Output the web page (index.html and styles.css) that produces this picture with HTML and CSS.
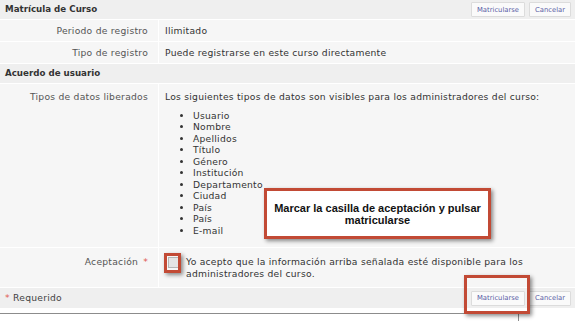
FILE: index.html
```html
<!DOCTYPE html>
<html lang="es">
<head>
    <meta charset="UTF-8">
    <meta name="viewport" content="width=device-width, initial-scale=1.0">
    <title>Matrícula de Curso</title>
    <link rel="stylesheet" href="styles.css">
</head>
<body>

    <div class="page">
        <div class="panel">
            <div class="bar">
                <h1>Matrícula de Curso</h1>
                <div class="actions">
                    <button>Matricularse</button>
                    <button>Cancelar</button>
                </div>
            </div>

            <div class="row">
                <div class="label">Periodo de registro</div>
                <div class="value">Ilimitado</div>
            </div>
            <div class="row">
                <div class="label">Tipo de registro</div>
                <div class="value">Puede registrarse en este curso directamente</div>
            </div>

            <div class="bar">
                <h2>Acuerdo de usuario</h2>
            </div>

            <div class="row data-row">
                <div class="label">Tipos de datos liberados</div>
                <div class="value">
                    <p>Los siguientes tipos de datos son visibles para los administradores del curso:</p>
                    <ul>
                        <li>Usuario</li>
                        <li>Nombre</li>
                        <li>Apellidos</li>
                        <li>Título</li>
                        <li>Género</li>
                        <li>Institución</li>
                        <li>Departamento</li>
                        <li>Ciudad</li>
                        <li>País</li>
                        <li>País</li>
                        <li>E-mail</li>
                    </ul>
                </div>
            </div>

            <div class="row accept-row">
                <div class="label"><span>Aceptación</span><span class="req">*</span></div>
                <div class="value accept">
                    <span class="check"></span>
                    <span>Yo acepto que la información arriba señalada esté disponible para los administradores del curso.</span>
                </div>
            </div>

            <div class="bar foot">
                <span><span class="req">*</span> Requerido</span>
                <div class="actions">
                    <button>Matricularse</button>
                    <button>Cancelar</button>
                </div>
            </div>
        </div>

        <div class="next-box"></div>

        <!-- marcas del tutorial -->
        <div class="callout">Marcar la casilla de aceptación y pulsar matricularse</div>
        <div class="mark mark-check"></div>
        <div class="mark mark-button"></div>
    </div>

</body>
</html>
```

FILE: styles.css
```css
html {
    overflow: hidden;
}

body {
    margin: 0;
    padding: 0;
    background-color: #ffffff;
    font-family: 'DejaVu Sans', Verdana, sans-serif;
    font-size: 9.2px;
    letter-spacing: 0.25px;
    line-height: 11.5px;
    color: #3a3a3a;
}

.page {
    position: relative;
    width: 580px;
    height: 321px;
}

.panel {
    width: 575px;
    display: flex;
    flex-direction: column;
    gap: 1px;
    background-color: #ffffff;
}

.bar {
    height: 19px;
    display: flex;
    align-items: center;
    justify-content: space-between;
    padding: 0 4px 0 5px;
    background-color: #efefef;
}

.bar h1, .bar h2 {
    margin: 0;
    font-size: 8.7px;
    letter-spacing: 0;
    font-weight: bold;
    color: #333;
}

.actions {
    display: flex;
    gap: 4px;
}

button {
    height: 15px;
    padding: 0 5px;
    font-family: 'DejaVu Sans', Verdana, sans-serif;
    font-size: 6.8px;
    letter-spacing: 0;
    color: #5b5ea6;
    background-color: #fafafa;
    border: 1px solid #dcdcdc;
    border-radius: 1px;
}

.row {
    display: grid;
    grid-template-columns: 158px 1fr;
    column-gap: 1px;
    min-height: 21px;
}

.label, .value {
    background-color: #f6f6f6;
    display: flex;
    align-items: center;
}

.label {
    justify-content: flex-end;
    padding-right: 10px;
    color: #555;
}

.value {
    padding-left: 6px;
    color: #333;
}

.data-row .label,
.data-row .value {
    align-items: flex-start;
    padding-top: 7px;
}

.data-row .value {
    display: block;
    padding-bottom: 11px;
}

.data-row p {
    margin: 0 0 7px;
}

.data-row ul {
    margin: 0;
    padding-left: 28px;
}

.accept-row {
    min-height: 39px;
}

.accept-row .label,
.accept-row .value {
    align-items: flex-start;
    padding-top: 8px;
}

.accept {
    gap: 7px;
    padding-right: 28px;
}

.check {
    flex: none;
    width: 9px;
    height: 9px;
    margin: 1px 0 0 3px;
    border: 1px solid #b5b5b5;
    background-color: #e4e4e4;
}

.req {
    color: #e0584f;
}

.label .req {
    margin-left: 5px;
}

.foot {
    height: 20px;
    color: #444;
}

.next-box {
    margin-top: 5px;
    width: 518px;
    height: 12px;
    border-top: 1px solid #8c8c8c;
    border-right: 1px solid #8c8c8c;
}

.callout {
    position: absolute;
    left: 264px;
    top: 188px;
    width: 227px;
    height: 51px;
    box-sizing: border-box;
    padding-top: 11px;
    border: 3px solid #c24a35;
    background-color: #ffffff;
    box-shadow: 2px 2px 4px rgba(0, 0, 0, 0.45);
    font-family: 'Liberation Sans', Arial, sans-serif;
    font-size: 11px;
    letter-spacing: 0;
    font-weight: bold;
    line-height: 12px;
    color: #111;
    text-align: center;
}

.mark {
    position: absolute;
    box-sizing: border-box;
    border: 3px solid #c24a35;
    box-shadow: 2px 2px 4px rgba(0, 0, 0, 0.45);
}

.mark-check {
    left: 164px;
    top: 253px;
    width: 17px;
    height: 20px;
}

.mark-button {
    left: 464px;
    top: 275px;
    width: 66px;
    height: 39px;
}
```
